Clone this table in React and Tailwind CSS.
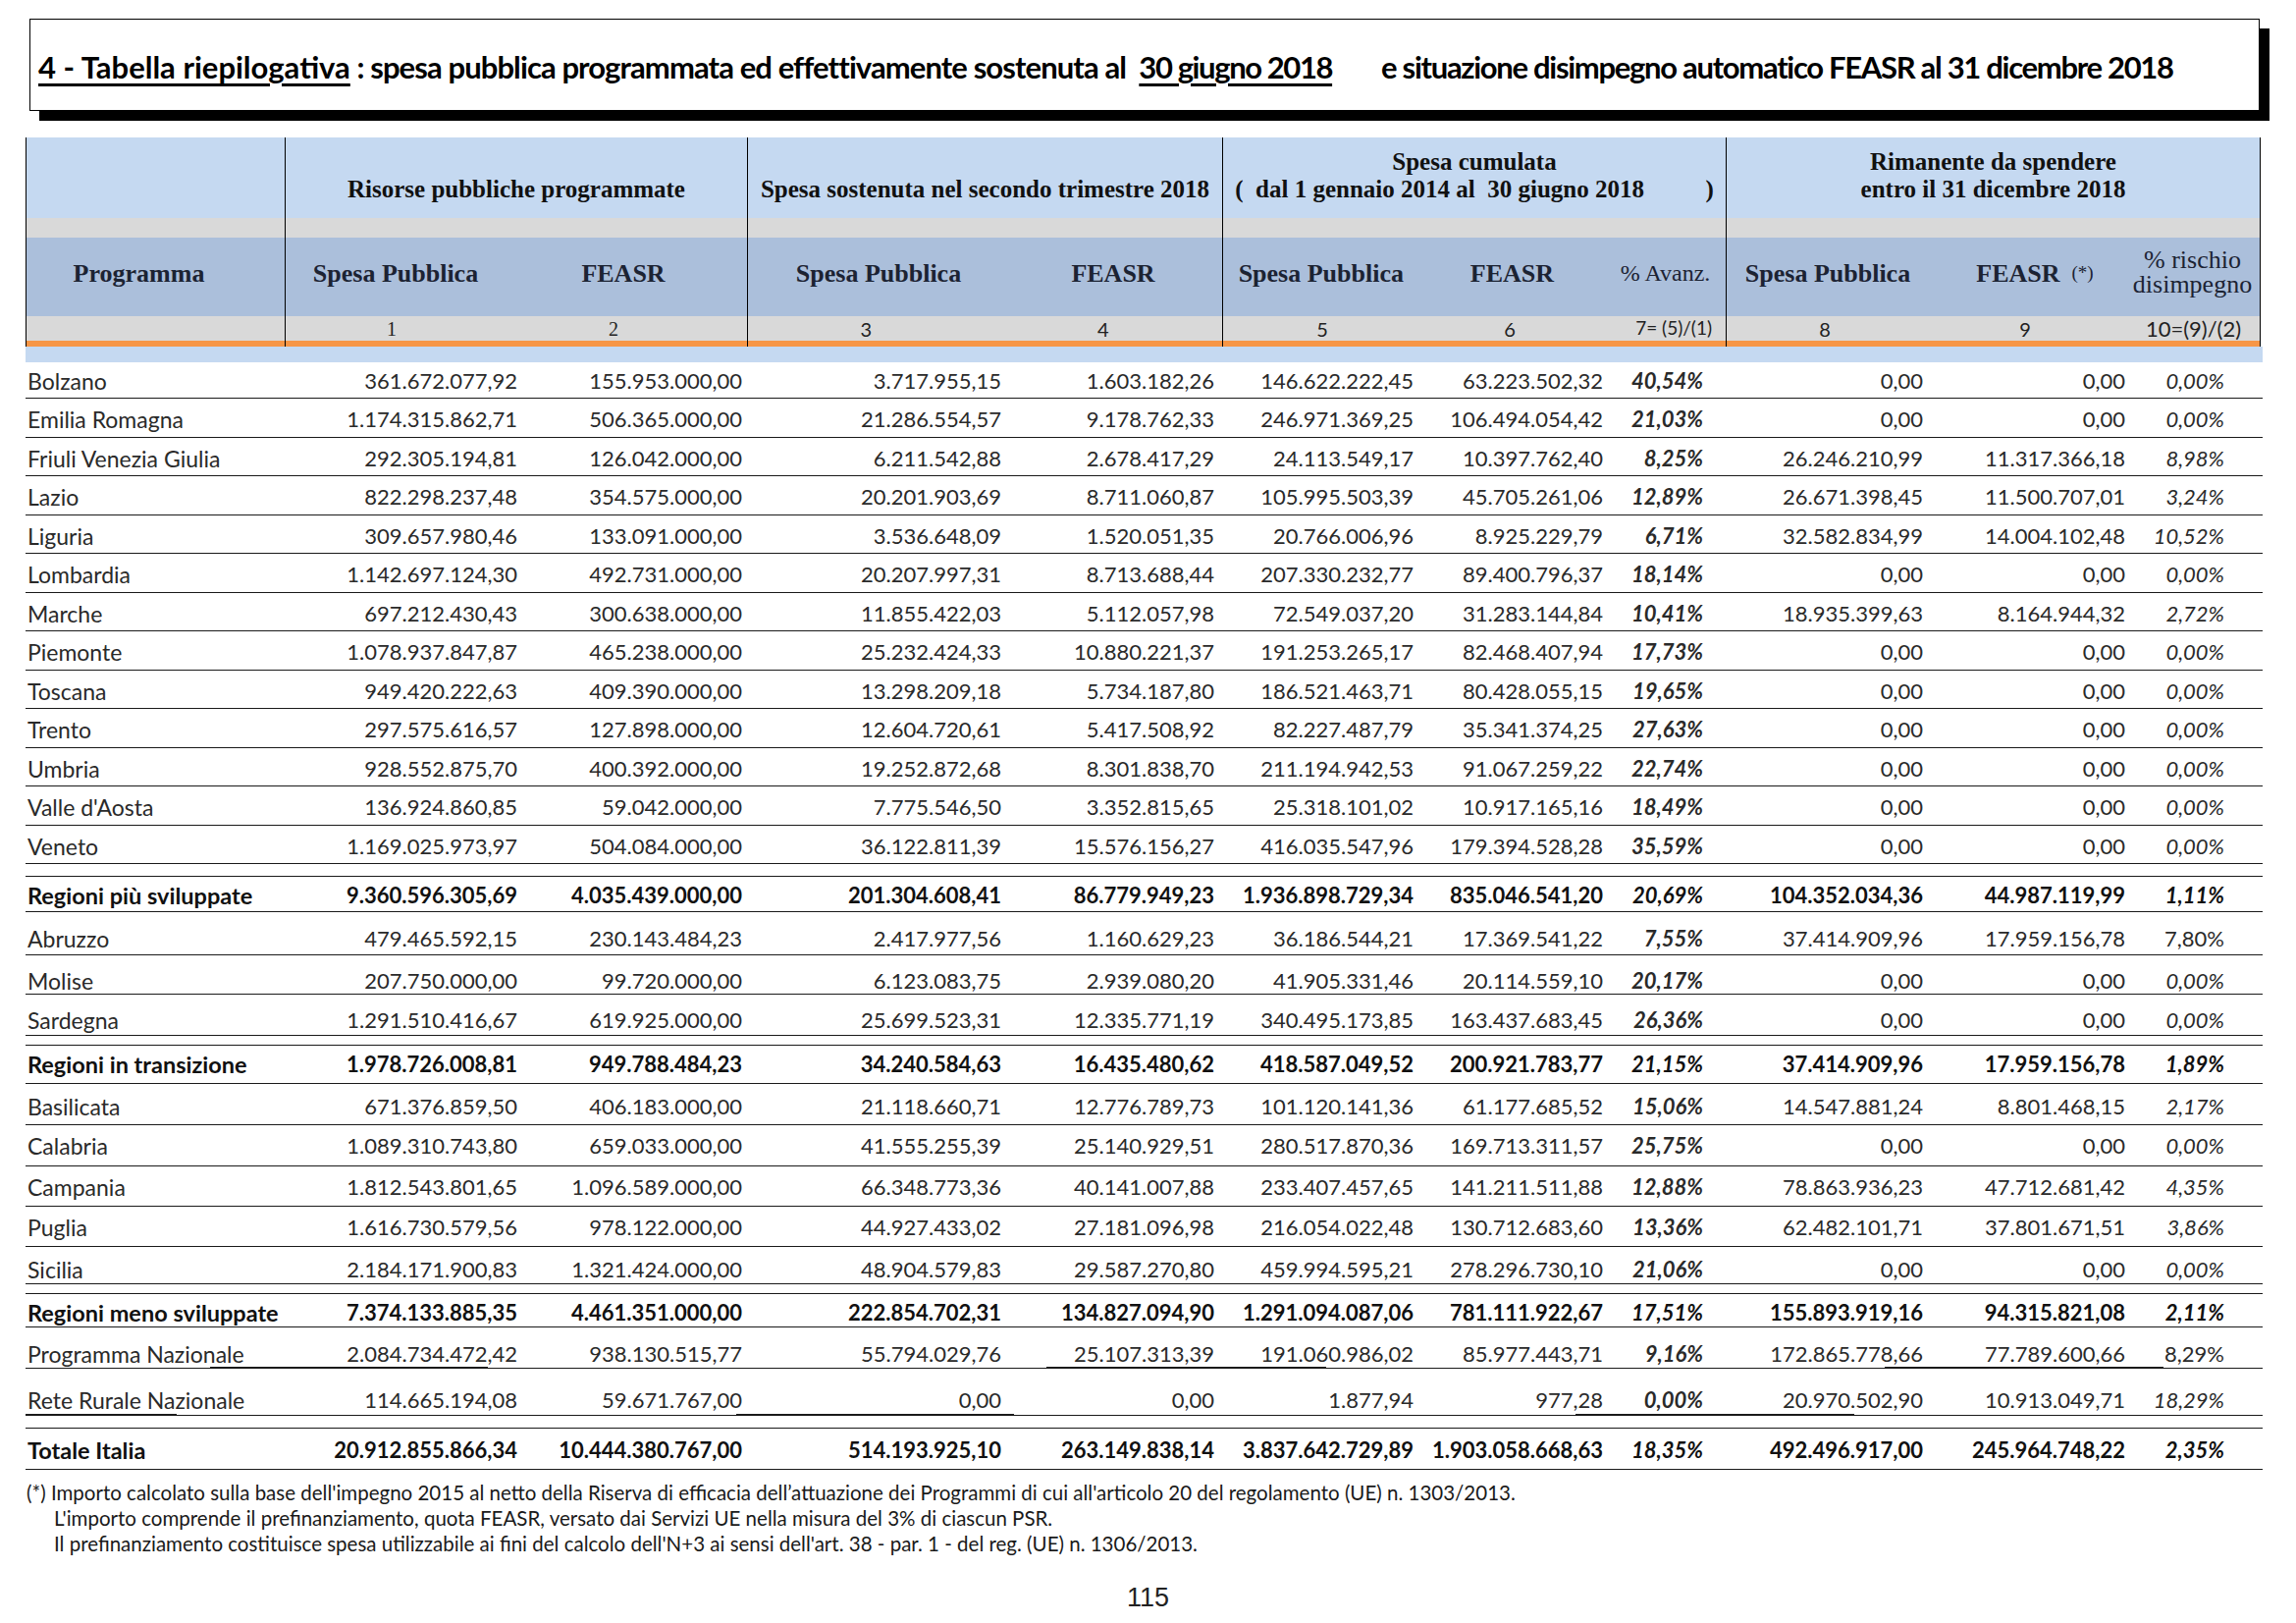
import React from 'react';

const SERIF = "font-['Liberation_Serif',serif]";

// Row data: name, 10 values, styling flags
const rows = [
    { n: 'Bolzano', v: ['361.672.077,92', '155.953.000,00', '3.717.955,15', '1.603.182,26', '146.622.222,45', '63.223.502,32', '40,54%', '0,00', '0,00', '0,00%'], h: 'h-[37px]', pt: 'pt-[1px]' },
    { n: 'Emilia Romagna', v: ['1.174.315.862,71', '506.365.000,00', '21.286.554,57', '9.178.762,33', '246.971.369,25', '106.494.054,42', '21,03%', '0,00', '0,00', '0,00%'] },
    { n: 'Friuli Venezia Giulia', v: ['292.305.194,81', '126.042.000,00', '6.211.542,88', '2.678.417,29', '24.113.549,17', '10.397.762,40', '8,25%', '26.246.210,99', '11.317.366,18', '8,98%'] },
    { n: 'Lazio', v: ['822.298.237,48', '354.575.000,00', '20.201.903,69', '8.711.060,87', '105.995.503,39', '45.705.261,06', '12,89%', '26.671.398,45', '11.500.707,01', '3,24%'] },
    { n: 'Liguria', v: ['309.657.980,46', '133.091.000,00', '3.536.648,09', '1.520.051,35', '20.766.006,96', '8.925.229,79', '6,71%', '32.582.834,99', '14.004.102,48', '10,52%'] },
    { n: 'Lombardia', v: ['1.142.697.124,30', '492.731.000,00', '20.207.997,31', '8.713.688,44', '207.330.232,77', '89.400.796,37', '18,14%', '0,00', '0,00', '0,00%'] },
    { n: 'Marche', v: ['697.212.430,43', '300.638.000,00', '11.855.422,03', '5.112.057,98', '72.549.037,20', '31.283.144,84', '10,41%', '18.935.399,63', '8.164.944,32', '2,72%'] },
    { n: 'Piemonte', v: ['1.078.937.847,87', '465.238.000,00', '25.232.424,33', '10.880.221,37', '191.253.265,17', '82.468.407,94', '17,73%', '0,00', '0,00', '0,00%'] },
    { n: 'Toscana', v: ['949.420.222,63', '409.390.000,00', '13.298.209,18', '5.734.187,80', '186.521.463,71', '80.428.055,15', '19,65%', '0,00', '0,00', '0,00%'] },
    { n: 'Trento', v: ['297.575.616,57', '127.898.000,00', '12.604.720,61', '5.417.508,92', '82.227.487,79', '35.341.374,25', '27,63%', '0,00', '0,00', '0,00%'] },
    { n: 'Umbria', v: ['928.552.875,70', '400.392.000,00', '19.252.872,68', '8.301.838,70', '211.194.942,53', '91.067.259,22', '22,74%', '0,00', '0,00', '0,00%'] },
    { n: "Valle d'Aosta", v: ['136.924.860,85', '59.042.000,00', '7.775.546,50', '3.352.815,65', '25.318.101,02', '10.917.165,16', '18,49%', '0,00', '0,00', '0,00%'] },
    { n: 'Veneto', v: ['1.169.025.973,97', '504.084.000,00', '36.122.811,39', '15.576.156,27', '416.035.547,96', '179.394.528,28', '35,59%', '0,00', '0,00', '0,00%'] },
    { spacer: true, h: 'h-[13px]' },
    { n: 'Regioni più sviluppate', bold: true, v: ['9.360.596.305,69', '4.035.439.000,00', '201.304.608,41', '86.779.949,23', '1.936.898.729,34', '835.046.541,20', '20,69%', '104.352.034,36', '44.987.119,99', '1,11%'], h: 'h-[36px]', pt: 'pt-[3px]' },
    { n: 'Abruzzo', v: ['479.465.592,15', '230.143.484,23', '2.417.977,56', '1.160.629,23', '36.186.544,21', '17.369.541,22', '7,55%', '37.414.909,96', '17.959.156,78', '7,80%'], h: 'h-[44px]', pt: 'pt-[11px]', upright: true },
    { n: 'Molise', v: ['207.750.000,00', '99.720.000,00', '6.123.083,75', '2.939.080,20', '41.905.331,46', '20.114.559,10', '20,17%', '0,00', '0,00', '0,00%'], h: 'h-[40px]', pt: 'pt-[13px]' },
    { n: 'Sardegna', v: ['1.291.510.416,67', '619.925.000,00', '25.699.523,31', '12.335.771,19', '340.495.173,85', '163.437.683,45', '26,36%', '0,00', '0,00', '0,00%'], h: 'h-[42px]', pt: 'pt-[11px]' },
    { spacer: true, h: 'h-[10px]' },
    { n: 'Regioni in transizione', bold: true, v: ['1.978.726.008,81', '949.788.484,23', '34.240.584,63', '16.435.480,62', '418.587.049,52', '200.921.783,77', '21,15%', '37.414.909,96', '17.959.156,78', '1,89%'], h: 'h-[39px]', pt: 'pt-[0px]' },
    { n: 'Basilicata', v: ['671.376.859,50', '406.183.000,00', '21.118.660,71', '12.776.789,73', '101.120.141,36', '61.177.685,52', '15,06%', '14.547.881,24', '8.801.468,15', '2,17%'], h: 'h-[42px]', pt: 'pt-[4px]' },
    { n: 'Calabria', v: ['1.089.310.743,80', '659.033.000,00', '41.555.255,39', '25.140.929,51', '280.517.870,36', '169.713.311,57', '25,75%', '0,00', '0,00', '0,00%'], h: 'h-[42px]', pt: 'pt-[0px]' },
    { n: 'Campania', v: ['1.812.543.801,65', '1.096.589.000,00', '66.348.773,36', '40.141.007,88', '233.407.457,65', '141.211.511,88', '12,88%', '78.863.936,23', '47.712.681,42', '4,35%'], h: 'h-[41px]', pt: 'pt-[1px]' },
    { n: 'Puglia', v: ['1.616.730.579,56', '978.122.000,00', '44.927.433,02', '27.181.096,98', '216.054.022,48', '130.712.683,60', '13,36%', '62.482.101,71', '37.801.671,51', '3,86%'], h: 'h-[41px]', pt: 'pt-[2px]' },
    { n: 'Sicilia', v: ['2.184.171.900,83', '1.321.424.000,00', '48.904.579,83', '29.587.270,80', '459.994.595,21', '278.296.730,10', '21,06%', '0,00', '0,00', '0,00%'], h: 'h-[38px]', pt: 'pt-[8px]' },
    { spacer: true, h: 'h-[10px]' },
    { n: 'Regioni meno sviluppate', bold: true, v: ['7.374.133.885,35', '4.461.351.000,00', '222.854.702,31', '134.827.094,90', '1.291.094.087,06', '781.111.922,67', '17,51%', '155.893.919,16', '94.315.821,08', '2,11%'], h: 'h-[34px]', pt: 'pt-[5px]' },
    { n: 'Programma Nazionale', v: ['2.084.734.472,42', '938.130.515,77', '55.794.029,76', '25.107.313,39', '191.060.986,02', '85.977.443,71', '9,16%', '172.865.778,66', '77.789.600,66', '8,29%'], h: 'h-[42px]', pt: 'pt-[13px]', upright: true, segs: 'pn' },
    { n: 'Rete Rurale Nazionale', v: ['114.665.194,08', '59.671.767,00', '0,00', '0,00', '1.877,94', '977,28', '0,00%', '20.970.502,90', '10.913.049,71', '18,29%'], h: 'h-[48px]', pt: 'pt-[17px]', segs: 'rrn' },
    { spacer: true, h: 'h-[13px]' },
    { n: 'Totale Italia', bold: true, v: ['20.912.855.866,34', '10.444.380.767,00', '514.193.925,10', '263.149.838,14', '3.837.642.729,89', '1.903.058.668,63', '18,35%', '492.496.917,00', '245.964.748,22', '2,35%'], h: 'h-[42px]', pt: 'pt-[3px]' },
];

const GRID = 'grid grid-cols-[304px_197px_229px_264px_217px_203px_193px_102px_224px_206px_101px_39px]';

// heavier border pieces that sit on top of some row lines
const Segs = ({ kind }) => {
    if (kind === 'pn') {
        return (
            <div className="flex h-[2px] -mt-[2px]">
                <div className="w-[188px]" />
                <div className="w-[283px] bg-[#1a1a1a]" />
                <div className="w-[569px]" />
                <div className="w-[285px] bg-[#1a1a1a]" />
                <div className="w-[569px]" />
                <div className="w-[284px] bg-[#1a1a1a]" />
            </div>
        );
    }
    return (
        <div className="flex h-[2px] -mt-[2px]">
            <div className="w-[154px] bg-[#1a1a1a]" />
            <div className="w-[570px]" />
            <div className="w-[283px] bg-[#1a1a1a]" />
            <div className="w-[572px]" />
            <div className="w-[284px] bg-[#1a1a1a]" />
        </div>
    );
};

const Row = ({ r }) => {
    if (r.spacer) return <div className={`${r.h} border-b-[1.5px] border-[#1a1a1a]`} />;
    const base = r.bold ? 'font-bold text-[#111]' : 'text-[#2a2a2a]';
    return (
        <>
            <div className={`${GRID} ${r.h || 'h-[39.5px]'} ${r.pt || 'pt-[4px]'} items-center leading-[24px] border-b-[1.5px] border-[#1a1a1a] ${base}`}>
                <div className={`pl-[2px] whitespace-nowrap ${r.bold ? 'text-[23.5px]' : 'text-[23px]'}`}>{r.n}</div>
                {r.v.map((val, i) => {
                    let cls = 'text-right whitespace-nowrap';
                    if (i === 6) cls += ' font-bold italic';
                    if (i === 9 && !(r.upright && !r.bold)) cls += ' italic';
                    return <div key={i} className={cls}>{val}</div>;
                })}
                <div />
            </div>
            {r.segs && <Segs kind={r.segs} />}
        </>
    );
};

const Block = ({ w, first, title, subs, nums }) => (
    <div className={`${w} flex flex-col border-r border-black ${first ? 'border-l' : ''}`}>
        <div className={`h-[82px] bg-[#c5d9f1] flex flex-col items-center justify-end pb-[15px] ${SERIF} font-bold text-[25px] leading-[28px] text-[#111] whitespace-pre`}>
            {title}
        </div>
        <div className="h-[20px] bg-[#d9d9d9]" />
        <div className="h-[80px] bg-[#abbfdb] flex">{subs}</div>
        <div className="h-[25px] bg-[#d9d9d9] flex text-[20px] text-[#222]">{nums}</div>
        <div className="h-[6px] bg-[#f79646]" />
    </div>
);

const Sub = ({ w, children }) => (
    <div className={`${w} flex items-center justify-center pb-[8px] ${SERIF} font-bold text-[26px] text-[#1c2333] whitespace-nowrap`}>
        {children}
    </div>
);

const Num = ({ w, children, serif }) => (
    <div className={`${w} flex items-center justify-center ${serif ? SERIF : ''}`}>{children}</div>
);

export default function App() {
    return (
        <div className="w-[2339px] h-[1653px] bg-white overflow-hidden font-['Lato',sans-serif] text-[22px]">
            {/* Title box */}
            <div className="ml-[30px] mt-[19px] w-[2272px] h-[94px] border border-black shadow-[10px_10px_0_0_#000] flex items-center pl-[8px] pt-[4px] font-bold text-[31px] text-black whitespace-pre">
                <span className="underline decoration-[3px] underline-offset-[5px]">4 - Tabella riepilogativa</span>
                <span className="tracking-[-0.9px]"> : spesa pubblica programmata ed effettivamente sostenuta al  </span>
                <span className="underline decoration-[3px] underline-offset-[5px] tracking-[-1.4px]">30 giugno 2018</span>
                <span className="ml-[50px] tracking-[-1.3px]">e situazione disimpegno automatico FEASR al 31 dicembre 2018</span>
            </div>

            {/* Table */}
            <div className="ml-[26px] mt-[27px] w-[2279px]">
                <div className="flex">
                    <Block
                        w="w-[265px]"
                        first
                        title=""
                        subs={<Sub w="w-full pr-[34px]">Programma</Sub>}
                        nums={<div className="w-full" />}
                    />
                    <Block
                        w="w-[471px]"
                        title="Risorse pubbliche programmate"
                        subs={<><Sub w="w-[224px]">Spesa Pubblica</Sub><Sub w="w-[240px]">FEASR</Sub></>}
                        nums={<><Num w="w-[216px]" serif>1</Num><Num w="w-[236px]" serif>2</Num></>}
                    />
                    <Block
                        w="w-[484px]"
                        title="Spesa sostenuta nel secondo trimestre 2018"
                        subs={<><Sub w="w-[266px]">Spesa Pubblica</Sub><Sub w="w-[212px]">FEASR</Sub></>}
                        nums={<><Num w="w-[242px]">3</Num><Num w="w-[244px]">4</Num></>}
                    />
                    <Block
                        w="w-[513px]"
                        title={<><span>Spesa cumulata</span><span>{'(  dal 1 gennaio 2014 al  30 giugno 2018          )'}</span></>}
                        subs={<>
                            <Sub w="w-[200px]">Spesa Pubblica</Sub>
                            <Sub w="w-[190px]">FEASR</Sub>
                            <div className={`w-[123px] flex items-center justify-center pb-[8px] ${SERIF} text-[24px] text-[#1c2333] whitespace-nowrap`}>% Avanz.</div>
                        </>}
                        nums={<>
                            <Num w="w-[202px]">5</Num>
                            <Num w="w-[180px]">6</Num>
                            <div className="flex-1 flex items-center justify-end pr-[14px] text-[19px]">7= (5)/(1)</div>
                        </>}
                    />
                    <Block
                        w="w-[544px]"
                        title={<><span>Rimanente da spendere</span><span>entro il 31 dicembre 2018</span></>}
                        subs={<>
                            <Sub w="w-[206px]">Spesa Pubblica</Sub>
                            <Sub w="w-[200px] pl-[16px]">FEASR <span className="ml-[12px] font-normal text-[19px]">(*)</span></Sub>
                            <div className={`flex-1 flex flex-col items-center justify-center pb-[10px] ${SERIF} text-[26px] leading-[25px] text-[#1c2333] whitespace-nowrap`}>
                                <span>% rischio</span>
                                <span>disimpegno</span>
                            </div>
                        </>}
                        nums={<>
                            <Num w="w-[200px]">8</Num>
                            <Num w="w-[208px]">9</Num>
                            <div className="flex-1 flex items-center justify-center text-[22px]">10=(9)/(2)</div>
                        </>}
                    />
                </div>
                <div className="h-[16px] bg-[#c5d9f1]" />

                {rows.map((r, i) => <Row key={i} r={r} />)}
            </div>

            {/* Footnotes */}
            <div className="ml-[27px] mt-[10px] text-[20.5px] leading-[26px] text-[#1a1a1a]">
                <div>(*) Importo calcolato sulla base dell'impegno 2015 al netto della Riserva di efficacia dell’attuazione dei Programmi di cui all'articolo 20 del regolamento (UE) n. 1303/2013.</div>
                <div className="pl-[28px]">L'importo comprende il prefinanziamento, quota FEASR, versato dai Servizi UE nella misura del 3% di ciascun PSR.</div>
                <div className="pl-[28px]">Il prefinanziamento costituisce spesa utilizzabile ai fini del calcolo dell'N+3 ai sensi dell'art. 38 - par. 1 - del reg. (UE) n. 1306/2013.</div>
            </div>

            <div className="mt-[27px] text-center font-['Liberation_Sans',sans-serif] text-[27px] leading-[30px] text-[#222]">115</div>
        </div>
    );
}
